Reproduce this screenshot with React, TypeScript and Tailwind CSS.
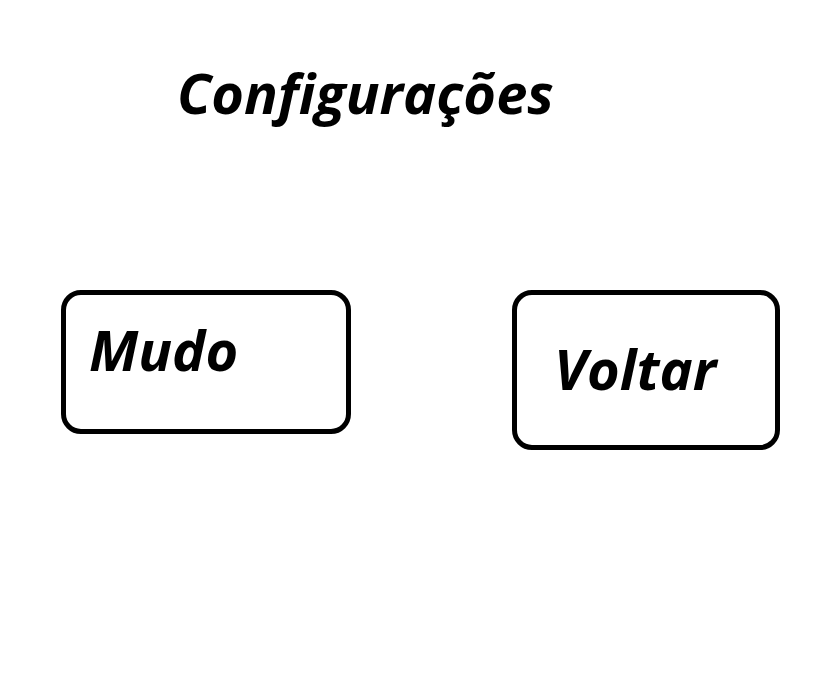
export default function App() {
  return (
    <main className="min-h-screen bg-white pt-[54px] pr-[59px] pl-[61px] font-['Open_Sans',sans-serif] text-black">
      <h1 className="pl-[116px] text-[56px] leading-[76px] font-bold italic [font-variant-ligatures:none]">Configurações</h1>
      <div className="mt-[160px] flex items-start justify-between">
        <button type="button" className="h-[144px] w-[290px] rounded-[20px] border-[5px] border-black pb-[26px] pl-[23px] text-left text-[56px] leading-[76px] font-bold italic">
          Mudo
        </button>
        <button type="button" className="h-[160px] w-[268px] rounded-[20px] border-[5px] border-black pb-[4px] pl-[37px] text-left text-[56px] leading-[76px] font-bold italic">
          Voltar
        </button>
      </div>
    </main>
  );
}
